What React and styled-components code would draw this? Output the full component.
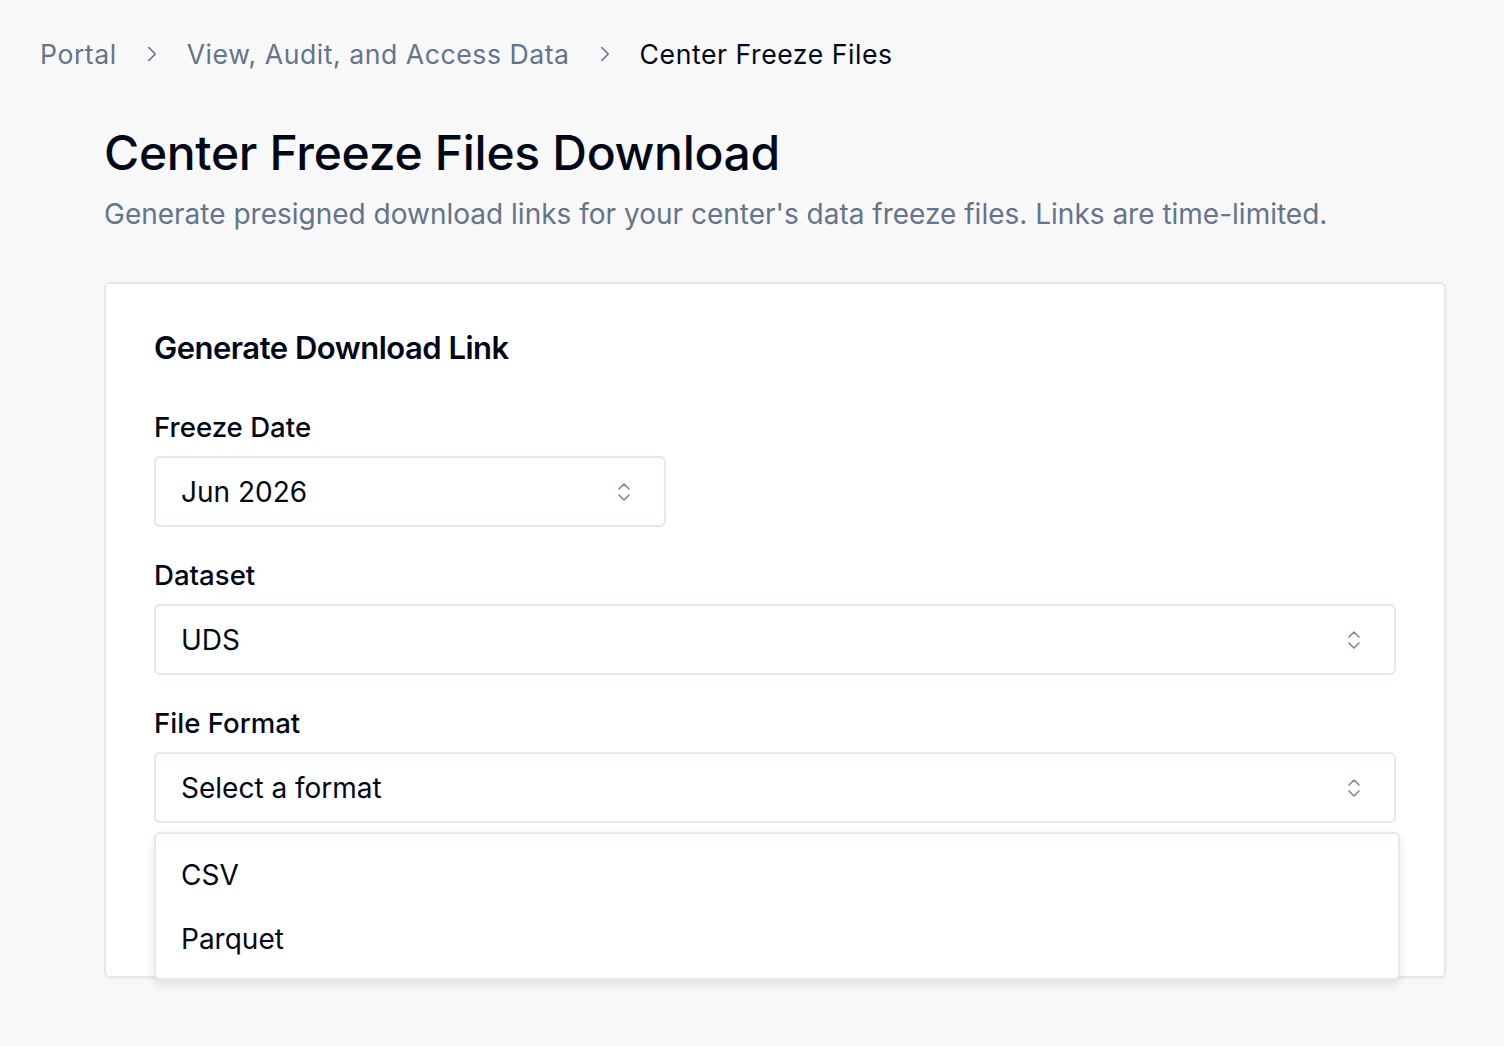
import React from 'react';
import styled, { createGlobalStyle } from 'styled-components';
import { ChevronRight, ChevronsUpDown } from 'lucide-react';

const GlobalStyle = createGlobalStyle`
  html, body {
    margin: 0;
    padding: 0;
    background: #f8f8f8;
    font-family: Inter, "Noto Sans", sans-serif;
    color: #020817;
  }
  * { box-sizing: border-box; }
`;

const fields = [
  { label: 'Freeze Date', value: 'Jun 2026', narrow: true },
  { label: 'Dataset', value: 'UDS' },
  { label: 'File Format', value: 'Select a format', open: true },
];

const formatOptions = ['CSV', 'Parquet'];

const App = () => {
  return (
    <>
      <GlobalStyle />
      <Page>
        <Breadcrumb>
          <Crumb>Portal</Crumb>
          <Sep><ChevronRight size={26} strokeWidth={1.5} /></Sep>
          <Crumb>View, Audit, and Access Data</Crumb>
          <Sep><ChevronRight size={26} strokeWidth={1.5} /></Sep>
          <Crumb current>Center Freeze Files</Crumb>
        </Breadcrumb>

        <Main>
          <Title>Center Freeze Files Download</Title>
          <Subtitle>
            Generate presigned download links for your center's data freeze files. Links are time-limited.
          </Subtitle>

          <Card>
            <CardTitle>Generate Download Link</CardTitle>
            <Form>
              {fields.map((f) => (
                <Field key={f.label}>
                  <Label>{f.label}</Label>
                  <SelectWrap narrow={f.narrow}>
                    <SelectBox>
                      <span>{f.value}</span>
                      <Caret><ChevronsUpDown size={24} strokeWidth={1.6} /></Caret>
                    </SelectBox>
                    {f.open && (
                      <Menu>
                        {formatOptions.map((o) => (
                          <MenuItem key={o}>{o}</MenuItem>
                        ))}
                      </Menu>
                    )}
                  </SelectWrap>
                </Field>
              ))}
            </Form>
          </Card>
        </Main>
      </Page>
    </>
  );
};

export default App;

const Page = styled.div`
  min-height: 1046px;
  padding: 30px 40px 60px 40px;
`;

const Breadcrumb = styled.nav`
  display: flex;
  align-items: center;
  gap: 22px;
  height: 48px;
  font-size: 26.6px;
`;

const Crumb = styled.span`
  color: ${(p) => (p.current ? '#020817' : '#64748b')};
  letter-spacing: 0.55px;
`;

const Sep = styled.span`
  display: flex;
  align-items: center;
  color: #64748b;
`;

const Main = styled.main`
  padding: 0 18px 0 64px;
`;

const Title = styled.h1`
  margin: 44px 0 0 0;
  font-size: 48px;
  font-weight: 500;
  line-height: 62px;
  letter-spacing: -0.3px;
  color: #020817;
`;

const Subtitle = styled.p`
  margin: 11px 0 0 0;
  font-size: 28px;
  line-height: 38px;
  color: #64748b;
`;

const Card = styled.section`
  margin-top: 49px;
  background: #ffffff;
  border: 2px solid #e5e7eb;
  border-radius: 6px;
  box-shadow: 0 1px 2px rgba(0, 0, 0, 0.05);
  padding: 46px 48px 48px 48px;
  height: 696px;
  overflow: visible;
`;

const CardTitle = styled.h2`
  margin: 0;
  font-size: 31px;
  font-weight: 600;
  line-height: 36px;
  letter-spacing: -0.5px;
  color: #020817;
`;

const Form = styled.div`
  display: flex;
  flex-direction: column;
  gap: 29px;
  margin-top: 42px;
`;

const Field = styled.div`
  display: flex;
  flex-direction: column;
  gap: 10px;
`;

const Label = styled.label`
  font-size: 27.6px;
  font-weight: 500;
  line-height: 38px;
  color: #020817;
`;

const SelectWrap = styled.div`
  position: relative;
  width: ${(p) => (p.narrow ? '512px' : '100%')};
`;

const SelectBox = styled.div`
  display: flex;
  align-items: center;
  justify-content: space-between;
  height: 71px;
  padding: 0 28px 0 25px;
  border: 2px solid #e2e8f0;
  border-radius: 6px;
  background: #ffffff;
  font-size: 28px;
  color: #020817;
`;

const Caret = styled.span`
  display: flex;
  color: #64748b;
  opacity: 0.85;
`;

const Menu = styled.div`
  position: absolute;
  top: calc(100% + 9px);
  left: 0;
  right: -4px;
  z-index: 10;
  background: #ffffff;
  border: 2px solid #e2e8f0;
  border-radius: 6px;
  box-shadow: 0 4px 10px rgba(0, 0, 0, 0.1);
  padding: 9px 0 7px 0;
`;

const MenuItem = styled.div`
  height: 64px;
  display: flex;
  align-items: center;
  padding-left: 25px;
  font-size: 28px;
  color: #020817;
`;
